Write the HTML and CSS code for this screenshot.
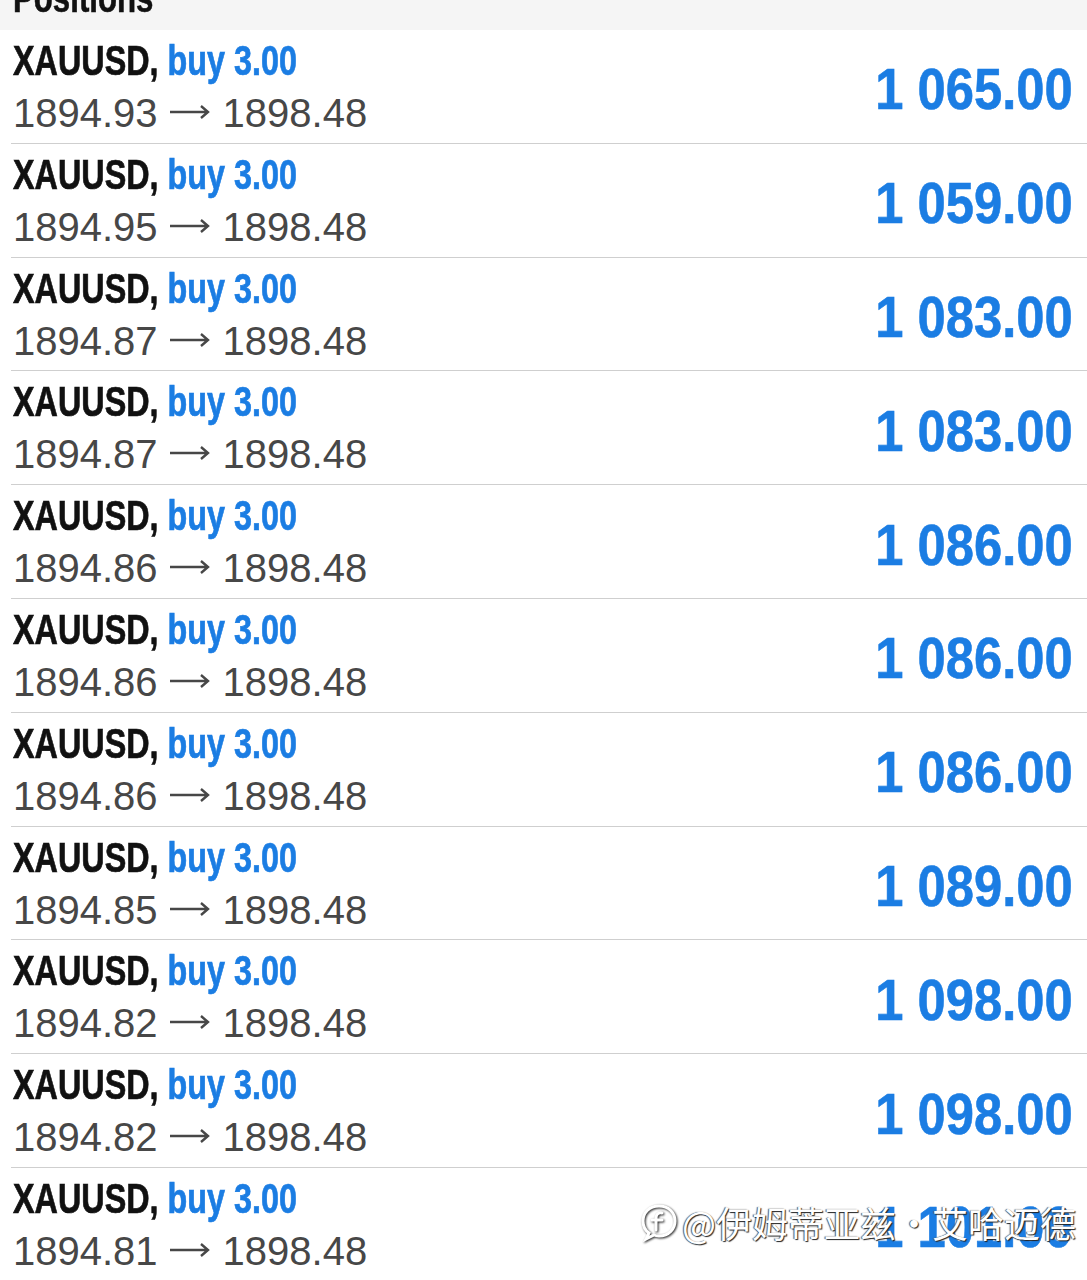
FILE: index.html
```html
<!DOCTYPE html>
<html lang="en">

<head>
    <meta charset="utf-8">
    <meta name="viewport" content="width=device-width, initial-scale=1.0">
    <title>Positions</title>

    <link rel="stylesheet" href="styles.css">
</head>

<body>
    <header class="sektion">
        <h1><span class="smal">Positions</span></h1>
    </header>

    <main class="liste">
        <div class="position">
            <div class="info">
                <p class="titel"><span class="smal">XAUUSD, <span class="retning">buy 3.00</span></span></p>
                <p class="kurs">1894.93<svg class="pil" width="40" height="16" viewBox="0 0 40 16"><path d="M0 8 H38 M31 2 L38 8 L31 14" /></svg>1898.48</p>
            </div>
            <p class="profit"><span class="smal">1 065.00</span></p>
        </div>
        <div class="position">
            <div class="info">
                <p class="titel"><span class="smal">XAUUSD, <span class="retning">buy 3.00</span></span></p>
                <p class="kurs">1894.95<svg class="pil" width="40" height="16" viewBox="0 0 40 16"><path d="M0 8 H38 M31 2 L38 8 L31 14" /></svg>1898.48</p>
            </div>
            <p class="profit"><span class="smal">1 059.00</span></p>
        </div>
        <div class="position">
            <div class="info">
                <p class="titel"><span class="smal">XAUUSD, <span class="retning">buy 3.00</span></span></p>
                <p class="kurs">1894.87<svg class="pil" width="40" height="16" viewBox="0 0 40 16"><path d="M0 8 H38 M31 2 L38 8 L31 14" /></svg>1898.48</p>
            </div>
            <p class="profit"><span class="smal">1 083.00</span></p>
        </div>
        <div class="position">
            <div class="info">
                <p class="titel"><span class="smal">XAUUSD, <span class="retning">buy 3.00</span></span></p>
                <p class="kurs">1894.87<svg class="pil" width="40" height="16" viewBox="0 0 40 16"><path d="M0 8 H38 M31 2 L38 8 L31 14" /></svg>1898.48</p>
            </div>
            <p class="profit"><span class="smal">1 083.00</span></p>
        </div>
        <div class="position">
            <div class="info">
                <p class="titel"><span class="smal">XAUUSD, <span class="retning">buy 3.00</span></span></p>
                <p class="kurs">1894.86<svg class="pil" width="40" height="16" viewBox="0 0 40 16"><path d="M0 8 H38 M31 2 L38 8 L31 14" /></svg>1898.48</p>
            </div>
            <p class="profit"><span class="smal">1 086.00</span></p>
        </div>
        <div class="position">
            <div class="info">
                <p class="titel"><span class="smal">XAUUSD, <span class="retning">buy 3.00</span></span></p>
                <p class="kurs">1894.86<svg class="pil" width="40" height="16" viewBox="0 0 40 16"><path d="M0 8 H38 M31 2 L38 8 L31 14" /></svg>1898.48</p>
            </div>
            <p class="profit"><span class="smal">1 086.00</span></p>
        </div>
        <div class="position">
            <div class="info">
                <p class="titel"><span class="smal">XAUUSD, <span class="retning">buy 3.00</span></span></p>
                <p class="kurs">1894.86<svg class="pil" width="40" height="16" viewBox="0 0 40 16"><path d="M0 8 H38 M31 2 L38 8 L31 14" /></svg>1898.48</p>
            </div>
            <p class="profit"><span class="smal">1 086.00</span></p>
        </div>
        <div class="position">
            <div class="info">
                <p class="titel"><span class="smal">XAUUSD, <span class="retning">buy 3.00</span></span></p>
                <p class="kurs">1894.85<svg class="pil" width="40" height="16" viewBox="0 0 40 16"><path d="M0 8 H38 M31 2 L38 8 L31 14" /></svg>1898.48</p>
            </div>
            <p class="profit"><span class="smal">1 089.00</span></p>
        </div>
        <div class="position">
            <div class="info">
                <p class="titel"><span class="smal">XAUUSD, <span class="retning">buy 3.00</span></span></p>
                <p class="kurs">1894.82<svg class="pil" width="40" height="16" viewBox="0 0 40 16"><path d="M0 8 H38 M31 2 L38 8 L31 14" /></svg>1898.48</p>
            </div>
            <p class="profit"><span class="smal">1 098.00</span></p>
        </div>
        <div class="position">
            <div class="info">
                <p class="titel"><span class="smal">XAUUSD, <span class="retning">buy 3.00</span></span></p>
                <p class="kurs">1894.82<svg class="pil" width="40" height="16" viewBox="0 0 40 16"><path d="M0 8 H38 M31 2 L38 8 L31 14" /></svg>1898.48</p>
            </div>
            <p class="profit"><span class="smal">1 098.00</span></p>
        </div>
        <div class="position">
            <div class="info">
                <p class="titel"><span class="smal">XAUUSD, <span class="retning">buy 3.00</span></span></p>
                <p class="kurs">1894.81<svg class="pil" width="40" height="16" viewBox="0 0 40 16"><path d="M0 8 H38 M31 2 L38 8 L31 14" /></svg>1898.48</p>
            </div>
            <p class="profit"><span class="smal">1 101.00</span></p>
        </div>

        <div class="vandmaerke">
            <svg class="logo" width="38" height="40" viewBox="0 0 38 40">
                <path d="M19 4 C9 4 3 11 3 19 C3 25 6 29 9 31 L6 37 L14 33 C16 34 17 34 19 34 C29 34 35 27 35 19 C35 11 29 4 19 4 Z" fill="none" stroke="#fff" stroke-width="3" />
                <path d="M22 11 C18 10 16 13 16 16 L16 28 M12 18 L22 18" fill="none" stroke="#fff" stroke-width="3" stroke-linecap="round" />
            </svg>
            <span>@伊姆蒂亚兹·艾哈迈德</span>
        </div>
    </main>

    <footer></footer>

</body>

</html>
```

FILE: styles.css
```css
body {
    margin: 0;
    background: #fff;
    font-family: 'Liberation Sans', Arial, sans-serif;
    overflow: hidden;
}

p,
h1 {
    margin: 0;
}

.smal {
    display: inline-block;
    white-space: nowrap;
}

.sektion {
    height: 30px;
    background: #f5f5f5;
    overflow: hidden;
    padding-left: 13px;
}

.sektion h1 {
    font-size: 40px;
    line-height: 40px;
    margin-top: -22px;
    color: #111;
    -webkit-text-stroke: 0.6px #111;
}

.sektion h1 .smal {
    transform: scaleX(0.78);
    transform-origin: left;
}

.liste {
    position: relative;
}

.position {
    display: flex;
    justify-content: space-between;
    align-items: center;
    height: 113.8px;
    box-sizing: border-box;
    margin-left: 11px;
    padding: 0 14px 0 2px;
    border-bottom: 1px solid #cfcfcf;
}

.info {
    align-self: flex-start;
    padding-top: 5px;
}

.titel {
    font-size: 42px;
    line-height: 52px;
    font-weight: bold;
    color: #111;
    -webkit-text-stroke: 0.7px currentColor;
}

.titel .smal {
    transform: scaleX(0.77);
    transform-origin: left;
}

.retning {
    color: #1b7de3;
}

.kurs {
    font-size: 40px;
    line-height: 52px;
    color: #474747;
    white-space: nowrap;
}

.pil {
    margin: 0 13px 0 12px;
    vertical-align: 7px;
    fill: none;
    stroke: #474747;
    stroke-width: 2.4;
}

.profit {
    font-size: 58px;
    line-height: 58px;
    font-weight: bold;
    color: #1b7de3;
    padding-top: 6px;
    -webkit-text-stroke: 0.6px currentColor;
}

.profit .smal {
    transform: scaleX(0.875);
    transform-origin: right;
}

.vandmaerke {
    position: absolute;
    left: 640px;
    top: 1166px;
    display: flex;
    align-items: center;
    gap: 4px;
    color: #fff;
    font-family: 'Noto Sans CJK SC', sans-serif;
    font-size: 36px;
    text-shadow: 1px 1px 1px #222, -1px 0 1px #555;
    white-space: nowrap;
}

.logo {
    filter: drop-shadow(1px 1px 1px #222);
}
```
